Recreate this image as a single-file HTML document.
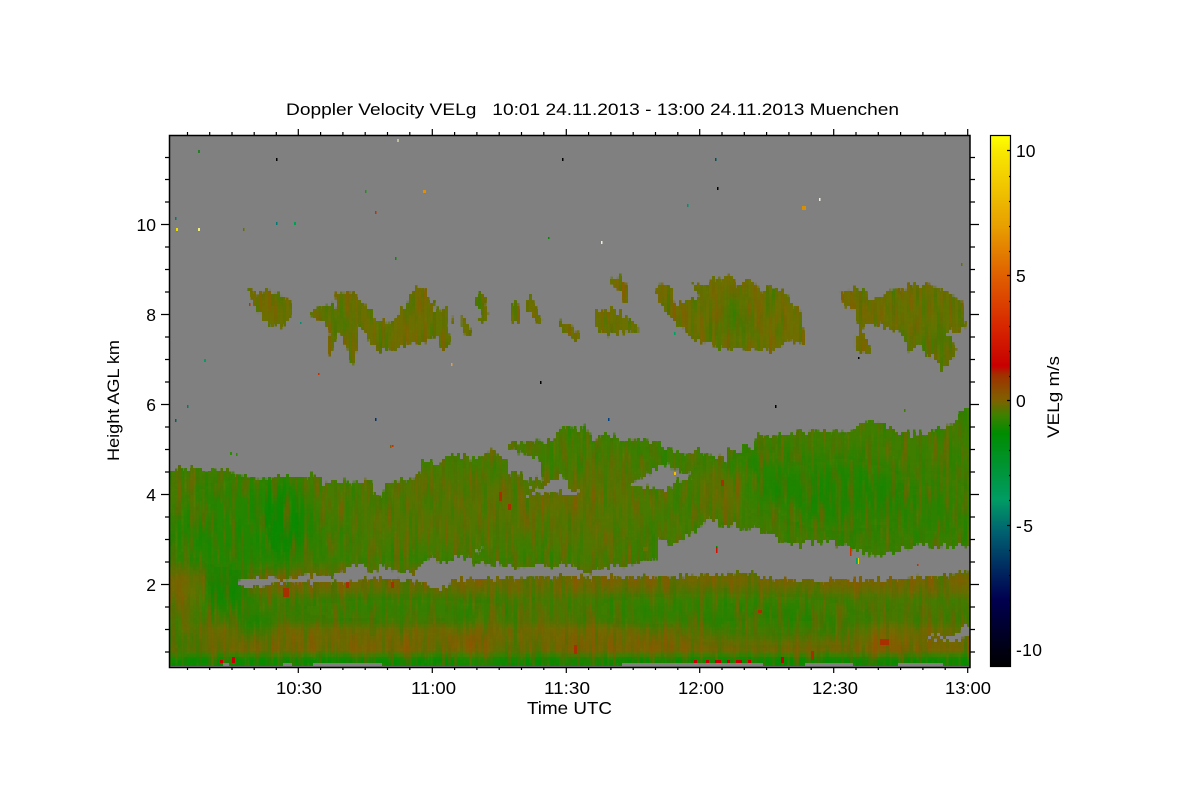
<!DOCTYPE html>
<html><head><meta charset="utf-8"><style>
html,body{margin:0;padding:0;background:#fff}
svg{display:block}
text{font-family:"Liberation Sans",sans-serif;fill:#000;white-space:pre}
</style></head><body>
<svg xmlns="http://www.w3.org/2000/svg" width="1200" height="800" viewBox="0 0 1200 800">
<defs>
<clipPath id="plot"><rect x="169" y="135" width="801" height="532"/></clipPath>
<linearGradient id="field" gradientUnits="userSpaceOnUse" x1="0" y1="270" x2="0" y2="667">
<stop offset="0" stop-color="#6e6e00"/>
<stop offset=".2" stop-color="#6a7000"/>
<stop offset=".36" stop-color="#3f7d00"/>
<stop offset=".5" stop-color="#3f7d00"/>
<stop offset=".58" stop-color="#487a00"/>
<stop offset=".73" stop-color="#3a7e00"/>
<stop offset=".76" stop-color="#5a7000"/>
<stop offset=".78" stop-color="#766400"/>
<stop offset=".81" stop-color="#626e00"/>
<stop offset=".83" stop-color="#457a00"/>
<stop offset=".885" stop-color="#4a7600"/>
<stop offset=".905" stop-color="#6e6a00"/>
<stop offset=".955" stop-color="#766400"/>
<stop offset=".97" stop-color="#3f7d00"/>
<stop offset=".98" stop-color="#0c8a00"/>
<stop offset="1" stop-color="#0c8a00"/>
</linearGradient>
<linearGradient id="bar" x1="0" y1="0" x2="0" y2="1">
<stop offset="0" stop-color="#ffff00"/>
<stop offset=".03" stop-color="#f8e800"/>
<stop offset=".169" stop-color="#e8a000"/>
<stop offset=".263" stop-color="#e06000"/>
<stop offset=".357" stop-color="#d82800"/>
<stop offset=".434" stop-color="#c80000"/>
<stop offset=".451" stop-color="#a03000"/>
<stop offset=".498" stop-color="#806000"/>
<stop offset=".526" stop-color="#408000"/>
<stop offset=".56" stop-color="#008c00"/>
<stop offset=".686" stop-color="#009c64"/>
<stop offset=".748" stop-color="#006070"/>
<stop offset=".818" stop-color="#002860"/>
<stop offset=".874" stop-color="#000050"/>
<stop offset="1" stop-color="#000000"/>
</linearGradient>
<filter id="blur" x="-50%" y="-50%" width="200%" height="200%"><feGaussianBlur stdDeviation="9"/></filter>
<filter id="pix" filterUnits="userSpaceOnUse" x="169" y="135" width="801" height="532" color-interpolation-filters="sRGB">
<feFlood x="170" y="136" width="1" height="1" flood-color="#000"/>
<feComposite x="169" y="135" width="3" height="3"/>
<feTile result="a"/>
<feComposite in="SourceGraphic" in2="a" operator="in"/>
<feMorphology operator="dilate" radius="1"/>
</filter>
<filter id="jag" filterUnits="userSpaceOnUse" x="150" y="120" width="840" height="570" color-interpolation-filters="sRGB">
<feTurbulence type="fractalNoise" baseFrequency="0.3 0.012" numOctaves="2" seed="7" result="n"/>
<feColorMatrix in="n" type="matrix" values="0 0 0 0 .5  1.6 0 0 0 -.3  0 0 0 0 .5  0 0 0 0 1" result="m"/>
<feDisplacementMap in="SourceGraphic" in2="m" scale="10" xChannelSelector="R" yChannelSelector="G"/>
</filter>
<filter id="brown" filterUnits="userSpaceOnUse" x="169" y="135" width="801" height="532" color-interpolation-filters="sRGB">
<feTurbulence type="fractalNoise" baseFrequency="0.22 0.03" numOctaves="2" seed="3"/>
<feColorMatrix type="matrix" values="0 0 0 0 .62  0 0 0 0 .30  0 0 0 0 0  2.6 0 0 0 -1.2"/>
</filter>
<filter id="green" filterUnits="userSpaceOnUse" x="169" y="135" width="801" height="532" color-interpolation-filters="sRGB">
<feTurbulence type="fractalNoise" baseFrequency="0.22 0.025" numOctaves="2" seed="11"/>
<feColorMatrix type="matrix" values="0 0 0 0 0  0 0 0 0 .55  0 0 0 0 0  2.6 0 0 0 -1.2"/>
</filter>
<mask id="cloud" maskUnits="userSpaceOnUse" x="150" y="120" width="840" height="570">
<g filter="url(#jag)">
<polygon fill="#fff" points="140,471 170,471 187,467 202,467 203,470 232,470 240,477 260,479 277,477 320,477 323,483 372,481 372,493 382,493 387,482 407,480 422,475 422,460 442,462 450,453 480,460 493,448 508,465 508,445 557,440 557,430 560,429 587,427 593,441 603,432 623,442 640,440 660,443 673,452 700,452 727,460 727,450 753,447 755,437 793,433 850,431 870,420 887,425 897,433 927,433 953,425 960,412 968,407 1000,407 1000,700 140,700"/>
<polygon fill="#000" points="237,583 242,578 267,578 270,575 280,580 297,578 300,574 333,575 353,565 363,565 373,573 380,567 413,574 425,560 447,562 457,557 477,563 530,567 547,565 573,565 583,572 640,563 657,557 658,540 680,543 693,533 710,518 727,526 767,532 782,543 820,543 825,539 847,548 880,556 903,548 943,545 1000,546 1000,572 970,572 893,580 827,580 823,588 820,580 777,580 747,573 667,577 560,577 453,580 447,588 427,588 425,582 373,579 347,582 280,583 260,587 243,587"/>
<polygon fill="#000" points="628,485 645,475 667,463 672,470 687,472 693,477 677,482 667,490 640,487"/>
<g transform="translate(160,420) scale(.3333)" fill="#000">
<polygon points="1045,90 1140,120 1150,175 1120,180 1095,185 1070,155 1045,165"/>
<polygon points="1100,215 1160,195 1225,175 1225,205 1262,215 1262,222 1100,222"/>
<polygon points="945,390 968,390 968,400 945,400"/>
</g>
<g transform="translate(560,420) scale(.3333)" fill="#000">
<polygon points="0,175 20,175 20,205 0,222"/>
<polygon points="1100,650 1160,650 1190,640 1205,620 1230,625 1230,655 1190,660 1100,660"/>
</g>
<g transform="translate(160,270) scale(.3333)" fill="#fff">
<polygon points="270,55 300,65 335,55 350,70 370,90 390,90 398,135 375,165 335,170 310,150 280,90 265,70"/>
<polygon points="450,125 480,110 510,95 530,120 525,70 540,80 575,65 610,105 640,125 640,155 655,150 690,160 720,130 745,90 770,45 800,65 810,100 825,90 820,125 865,115 860,170 873,210 865,237 850,235 820,195 800,215 730,228 700,235 665,242 635,222 620,195 590,155 595,210 585,270 575,275 565,250 555,210 535,190 525,205 510,260 505,255 505,210 510,190 495,155 465,145"/>
<polygon points="880,125 885,125 885,165 877,160"/>
<polygon points="905,135 915,135 925,175 938,185 928,203 920,200 905,170"/>
<polygon points="948,85 960,70 980,90 975,115 985,135 980,160 950,150 970,140 960,120 948,105"/>
<polygon points="1055,100 1075,100 1080,155 1055,155"/>
<polygon points="1100,85 1110,80 1130,110 1148,155 1125,155 1095,105"/>
<polygon points="1198,165 1230,158 1245,175 1260,200 1255,218 1225,195 1200,180"/>
</g>
<g transform="translate(560,270) scale(.3333)" fill="#fff">
<polygon points="150,35 180,28 200,40 207,105 190,90 170,55 150,50"/>
<polygon points="103,120 135,115 165,125 190,135 235,165 235,185 190,185 155,195 115,185 103,155"/>
<polygon points="285,65 300,45 335,55 345,100 380,85 420,80 395,35 430,50 470,22 510,18 530,45 570,30 610,60 660,55 690,85 720,120 735,200 737,218 680,215 660,235 600,240 500,240 440,215 400,215 380,185 340,150 310,120"/>
<polygon points="840,60 880,55 915,60 930,95 965,85 980,55 1030,60 1070,40 1100,35 1150,65 1205,85 1215,150 1225,150 1195,190 1155,175 1190,240 1180,270 1145,295 1120,262 1095,260 1085,220 1060,225 1045,250 1025,185 980,170 920,165 905,180 925,215 935,250 885,240 885,200 900,190 888,130 870,100 858,112 840,65"/>
</g>
</g>
<g fill="#000">
<rect x="313" y="664" width="69" height="3"/><rect x="223" y="664" width="6" height="3"/><rect x="284" y="664" width="9" height="3"/>
<rect x="623" y="664" width="141" height="3"/><rect x="806" y="664" width="47" height="3"/><rect x="897" y="664" width="46" height="3"/>
</g>
</mask>
</defs>

<rect width="1200" height="800" fill="#fff"/>
<rect x="169" y="135" width="801" height="532" fill="#808080"/>

<g clip-path="url(#plot)">
<g filter="url(#pix)">
<g mask="url(#cloud)">
<rect x="169" y="135" width="801" height="532" fill="url(#field)"/>
<g filter="url(#blur)">
<ellipse cx="245" cy="525" rx="70" ry="45" fill="#128a00" opacity=".65"/>
<ellipse cx="285" cy="515" rx="22" ry="40" fill="#008e00" opacity=".55"/>
<ellipse cx="225" cy="590" rx="30" ry="22" fill="#008c00" opacity=".8"/>
<ellipse cx="255" cy="625" rx="18" ry="10" fill="#008c00" opacity=".9"/>
<ellipse cx="170" cy="600" rx="25" ry="18" fill="#7a6200" opacity=".8"/>
<ellipse cx="165" cy="540" rx="20" ry="25" fill="#208600" opacity=".8"/>
<ellipse cx="172" cy="640" rx="14" ry="20" fill="#1a8800" opacity=".8"/>
<ellipse cx="840" cy="495" rx="70" ry="35" fill="#148800" opacity=".7"/>
<ellipse cx="760" cy="480" rx="30" ry="30" fill="#148800" opacity=".6"/>
<ellipse cx="930" cy="510" rx="40" ry="30" fill="#1a8500" opacity=".6"/>
<ellipse cx="455" cy="510" rx="100" ry="35" fill="#5a7200" opacity=".7"/>
<ellipse cx="590" cy="520" rx="50" ry="40" fill="#607000" opacity=".6"/>
<ellipse cx="600" cy="480" rx="30" ry="25" fill="#5a7200" opacity=".7"/>
<ellipse cx="720" cy="490" rx="25" ry="15" fill="#806000" opacity=".6"/>
<ellipse cx="540" cy="497" rx="60" ry="8" fill="#806000" opacity=".5"/>
<ellipse cx="505" cy="450" rx="20" ry="8" fill="#6a7000" opacity=".6"/>
<ellipse cx="720" cy="610" rx="130" ry="16" fill="#108c00" opacity=".5"/>
<ellipse cx="400" cy="610" rx="120" ry="10" fill="#188a00" opacity=".5"/>
<ellipse cx="800" cy="630" rx="120" ry="9" fill="#208600" opacity=".7"/>
<ellipse cx="510" cy="648" rx="25" ry="9" fill="#208600" opacity=".6"/>
<ellipse cx="885" cy="640" rx="14" ry="9" fill="#a84000" opacity=".8"/>
<ellipse cx="590" cy="650" rx="30" ry="7" fill="#8a5200" opacity=".5"/>
<ellipse cx="480" cy="640" rx="14" ry="16" fill="#8a5200" opacity=".6"/>
<ellipse cx="450" cy="660" rx="30" ry="5" fill="#009000" opacity=".6"/>
<ellipse cx="200" cy="645" rx="20" ry="10" fill="#108800" opacity=".3"/>
<ellipse cx="340" cy="322" rx="6" ry="20" fill="#1e8500" opacity=".7"/>
<ellipse cx="395" cy="325" rx="12" ry="8" fill="#6a7000" opacity=".4"/>
<ellipse cx="415" cy="305" rx="10" ry="12" fill="#806000" opacity=".6"/>
<ellipse cx="442" cy="325" rx="7" ry="9" fill="#308000" opacity=".6"/>
<ellipse cx="270" cy="305" rx="10" ry="8" fill="#7a6200" opacity=".6"/>
<ellipse cx="735" cy="320" rx="16" ry="16" fill="#2a8200" opacity=".6"/>
<ellipse cx="665" cy="295" rx="10" ry="8" fill="#806000" opacity=".7"/>
<ellipse cx="930" cy="345" rx="12" ry="10" fill="#1e8500" opacity=".9"/>
<ellipse cx="895" cy="310" rx="8" ry="12" fill="#308000" opacity=".4"/>
<ellipse cx="945" cy="310" rx="12" ry="15" fill="#308000" opacity=".3"/>
<ellipse cx="860" cy="300" rx="6" ry="6" fill="#8a5200" opacity=".7"/>
</g>
<rect x="169" y="405" width="801" height="262" filter="url(#brown)" opacity=".42"/>
<rect x="169" y="405" width="801" height="262" filter="url(#green)" opacity=".34"/>
<rect x="169" y="270" width="801" height="100" filter="url(#brown)" opacity=".22"/>
<rect x="169" y="270" width="801" height="100" filter="url(#green)" opacity=".08"/>
<g fill="#a83000">
<rect x="283" y="587" width="5" height="9"/><rect x="345" y="583" width="3" height="6"/><rect x="390" y="583" width="3" height="6"/>
<rect x="498" y="492" width="3" height="9"/><rect x="507" y="505" width="3" height="6"/><rect x="880" y="640" width="9" height="6"/>
<rect x="812" y="650" width="3" height="9"/><rect x="574" y="645" width="3" height="9"/><rect x="720" y="480" width="3" height="6"/>
</g>
<g fill="#c80000">
<rect x="232" y="658" width="3" height="6"/><rect x="220" y="660" width="3" height="3"/><rect x="693" y="660" width="3" height="3"/>
<rect x="705" y="660" width="3" height="3"/><rect x="714" y="660" width="6" height="3"/><rect x="726" y="660" width="3" height="3"/><rect x="735" y="660" width="6" height="3"/><rect x="747" y="660" width="3" height="3"/><rect x="780" y="657" width="3" height="6"/>
</g>
</g>
</g>
<!-- specks -->
<rect x="198" y="150" width="2" height="3" fill="#2a7a2a"/>
<rect x="276" y="158" width="1.5" height="3" fill="#000"/>
<rect x="175" y="217" width="1.5" height="3" fill="#007a70"/>
<rect x="176" y="228" width="2" height="3" fill="#f0e000"/>
<rect x="198" y="228" width="2" height="3" fill="#f0f080"/>
<rect x="243" y="228" width="1.5" height="3" fill="#6a7000"/>
<rect x="276" y="222" width="1.5" height="3" fill="#007a70"/>
<rect x="294" y="222" width="2" height="3" fill="#00a050"/>
<rect x="397" y="139" width="2" height="3" fill="#c0c0a0"/>
<rect x="562" y="158" width="1.5" height="3" fill="#000"/>
<rect x="715" y="158" width="1.5" height="3" fill="#005060"/>
<rect x="717" y="187" width="1.5" height="3" fill="#000"/>
<rect x="365" y="190" width="1.5" height="3" fill="#2a8a2a"/>
<rect x="423" y="190" width="3" height="3" fill="#e09000"/>
<rect x="375" y="211" width="1.5" height="3" fill="#c83000"/>
<rect x="687" y="204" width="1.5" height="3" fill="#009070"/>
<rect x="802" y="206" width="4" height="4" fill="#d89000"/>
<rect x="819" y="198" width="1.5" height="3" fill="#f0f0e0"/>
<rect x="601" y="241" width="1.5" height="3" fill="#f0f0d0"/>
<rect x="548" y="237" width="1.5" height="2" fill="#008800"/>
<rect x="395" y="257" width="1.5" height="3" fill="#009000"/>
<rect x="204" y="359" width="2" height="3" fill="#00a060"/>
<rect x="249" y="303" width="1.5" height="3" fill="#c03000"/>
<rect x="300" y="322" width="1.5" height="2" fill="#009070"/>
<rect x="318" y="373" width="1.5" height="2" fill="#c83000"/>
<rect x="451" y="363" width="1.5" height="3" fill="#e0a040"/>
<rect x="540" y="381" width="1.5" height="3" fill="#000"/>
<rect x="674" y="332" width="1.5" height="3" fill="#00a060"/>
<rect x="858" y="357" width="1.5" height="2" fill="#000"/>
<rect x="775" y="405" width="1.5" height="3" fill="#000"/>
<rect x="187" y="405" width="1.5" height="3" fill="#007a70"/>
<rect x="175" y="419" width="1.5" height="3" fill="#006060"/>
<rect x="375" y="418" width="1.5" height="3" fill="#003070"/>
<rect x="608" y="418" width="1.5" height="3" fill="#004080"/>
<rect x="390" y="445" width="1.5" height="3" fill="#7a6200"/>
<rect x="392" y="445" width="1.5" height="2" fill="#c83000"/>
<rect x="961" y="263" width="1.5" height="3" fill="#6a7000"/>
<rect x="904" y="409" width="1.5" height="3" fill="#3f7d00"/>
<rect x="230" y="452" width="2" height="3" fill="#2a8a00"/>
<rect x="236" y="453" width="1.5" height="3" fill="#2a8a00"/>
<rect x="716" y="546" width="1.5" height="5" fill="#009000"/>
<rect x="716" y="547" width="1.5" height="6" fill="#d01000"/>
<rect x="850" y="547" width="1.5" height="9" fill="#c83000"/>
<rect x="856" y="558" width="1.5" height="6" fill="#00a070"/>
<rect x="858" y="558" width="1" height="6" fill="#f0d000"/>
<rect x="674" y="472" width="2" height="3" fill="#f0c000"/>
<rect x="917" y="564" width="1.5" height="2" fill="#c83000"/>
<rect x="643" y="547" width="5" height="4" fill="#6a7000"/>
<rect x="758" y="610" width="4" height="3" fill="#a83000"/>
</g>

<!-- axes frame -->
<rect x="169.5" y="135.5" width="800.5" height="532" fill="none" stroke="#000" stroke-width="1.5"/>
<path fill="none" stroke="#000" stroke-width="1.2" d="
M187.5 135V132M209.7 135V132M232 135V132M254.2 135V132M276.3 135V132M320.6 135V132M342.9 135V132M365.2 135V132M387.5 135V132M409.8 135V132
M454.6 135V132M476.9 135V132M499.2 135V132M521.5 135V132M543.8 135V132M588.6 135V132M610.9 135V132M633.2 135V132M655.5 135V132M677.8 135V132
M722 135V132M744.3 135V132M766.6 135V132M788.9 135V132M811.2 135V132M856 135V132M878.3 135V132M900.6 135V132M922.9 135V132M945.2 135V132
M187.5 667V670M209.7 667V670M232 667V670M254.2 667V670M276.3 667V670M320.6 667V670M342.9 667V670M365.2 667V670M387.5 667V670M409.8 667V670
M454.6 667V670M476.9 667V670M499.2 667V670M521.5 667V670M543.8 667V670M588.6 667V670M610.9 667V670M633.2 667V670M655.5 667V670M677.8 667V670
M722 667V670M744.3 667V670M766.6 667V670M788.9 667V670M811.2 667V670M856 667V670M878.3 667V670M900.6 667V670M922.9 667V670M945.2 667V670
M298.3 135V129M432.3 135V129M566.3 135V129M699.7 135V129M833.7 135V129M967.7 135V129
M298.3 667V673M432.3 667V673M566.3 667V673M699.7 667V673M833.7 667V673M967.7 667V673
M161 224.5H169M161 314.5H169M161 404.5H169M161 494.5H169M161 584.5H169
M970 224.5H979M970 314.5H979M970 404.5H979M970 494.5H979M970 584.5H979
M165 157.5H169M165 179.5H169M165 202H169M165 247H169M165 269.5H169M165 292H169M165 337H169M165 359.5H169M165 382H169M165 427H169M165 449.5H169M165 472H169M165 517H169M165 539.5H169M165 562H169M165 607H169M165 629.5H169M165 652H169
M970 157.5H975M970 179.5H975M970 202H975M970 247H975M970 269.5H975M970 292H975M970 337H975M970 359.5H975M970 382H975M970 427H975M970 449.5H975M970 472H975M970 517H975M970 539.5H975M970 562H975M970 607H975M970 629.5H975M970 652H975"/>

<!-- colour bar -->
<rect x="990.5" y="135.5" width="20" height="531" fill="url(#bar)" stroke="#000" stroke-width="1.2"/>
<path fill="none" stroke="#000" stroke-width="1.2" d="M1009 176.5H1011M1009 201.5H1011M1009 226.5H1011M1009 251.5H1011M1009 301.5H1011M1009 326.5H1011M1009 351.5H1011M1009 376.5H1011M1009 425.5H1011M1009 450.5H1011M1009 475.5H1011M1009 500.5H1011M1009 550.5H1011M1009 575.5H1011M1009 600.5H1011M1009 625.5H1011M1007 150.5H1011M1007 275.5H1011M1007 400.5H1011M1007 525.5H1011M1007 650.5H1011"/>

<!-- text -->
<text x="286" y="115" font-size="16.5" textLength="613" lengthAdjust="spacingAndGlyphs" xml:space="preserve">Doppler Velocity VELg   10:01 24.11.2013 - 13:00 24.11.2013 Muenchen</text>

<g font-size="17.5">
<text x="276" y="694" textLength="46" lengthAdjust="spacingAndGlyphs">10:30</text>
<text x="411" y="694" textLength="45" lengthAdjust="spacingAndGlyphs">11:00</text>
<text x="544" y="694" textLength="46" lengthAdjust="spacingAndGlyphs">11:30</text>
<text x="678" y="694" textLength="46" lengthAdjust="spacingAndGlyphs">12:00</text>
<text x="812" y="694" textLength="46" lengthAdjust="spacingAndGlyphs">12:30</text>
<text x="945" y="694" textLength="46" lengthAdjust="spacingAndGlyphs">13:00</text>
</g>
<text x="527" y="714" font-size="17.5" textLength="85" lengthAdjust="spacingAndGlyphs">Time UTC</text>

<g font-size="17.5" text-anchor="end">
<text x="156" y="231">10</text>
<text x="156" y="321">8</text>
<text x="156" y="411">6</text>
<text x="156" y="501">4</text>
<text x="156" y="591">2</text>
</g>
<text transform="translate(119,461) rotate(-90)" font-size="17" textLength="121" lengthAdjust="spacingAndGlyphs">Height AGL km</text>

<g font-size="17.5">
<text x="1016" y="157">10</text>
<text x="1016" y="282">5</text>
<text x="1016" y="407">0</text>
<text x="1016" y="532" textLength="17" lengthAdjust="spacing">-5</text>
<text x="1016" y="656" textLength="26" lengthAdjust="spacing">-10</text>
</g>
<text transform="translate(1059,438) rotate(-90)" font-size="17" textLength="82" lengthAdjust="spacingAndGlyphs">VELg m/s</text>
</svg>
</body></html>
